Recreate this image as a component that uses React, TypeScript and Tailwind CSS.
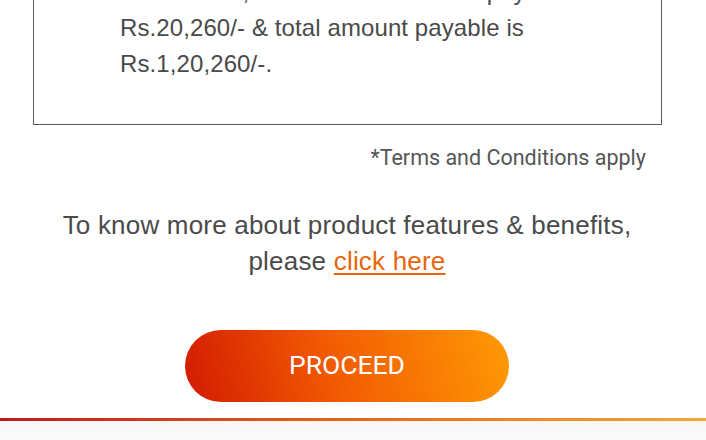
import React from "react";

export default function App() {
  return (
    <div className="w-[706px] h-[440px] overflow-hidden bg-white relative">
      <div className="ml-[33px] w-[629px] mt-[-27px] border border-[#5a5a5a] pl-[86px] pr-4 pb-[42px] pt-0">
        <div
          className="text-[24px] leading-[36px] text-[#4a4a4a] tracking-[0.1px] whitespace-nowrap"
          style={{ fontFamily: '"Liberation Sans", Arial, sans-serif' }}
        >
          <p>In this case, the total interest cost payable is</p>
          <p>Rs.20,260/- &amp; total amount payable is</p>
          <p>Rs.1,20,260/-.</p>
        </div>
      </div>
      <div
        className="mt-[20px] pr-[60px] text-right text-[21.5px] leading-[26px] text-[#555]"
        style={{ fontFamily: "Roboto, sans-serif" }}
      >
        *Terms and Conditions apply
      </div>
      <div
        className="mt-[36px] pr-[12px] text-center text-[26px] leading-[36px] text-[#4a4a4a] tracking-[0.2px]"
        style={{ fontFamily: '"Liberation Sans", Arial, sans-serif' }}
      >
        <p>To know more about product features &amp; benefits,</p>
        <p>
          please{" "}
          <a className="text-[#e8650c] underline underline-offset-[3px]">click here</a>
        </p>
      </div>
      <div className="mt-[51px] flex justify-center pr-[12px]">
        <button
          className="w-[324px] h-[72px] rounded-full bg-[linear-gradient(75deg,#d21a02_0%,#f25a02_45%,#ff9a05_100%)] text-white text-[26.5px] pb-[2px]"
          style={{ fontFamily: "Roboto, sans-serif" }}
        >
          PROCEED
        </button>
      </div>
      <div className="mt-[16px] h-[3px] bg-[linear-gradient(90deg,#bf1a1c,#e8661e_50%,#f2aa30)]" />
      <div className="h-[20px] bg-[linear-gradient(180deg,#f6f6f6,#fbfbfb)]" />
    </div>
  );
}
